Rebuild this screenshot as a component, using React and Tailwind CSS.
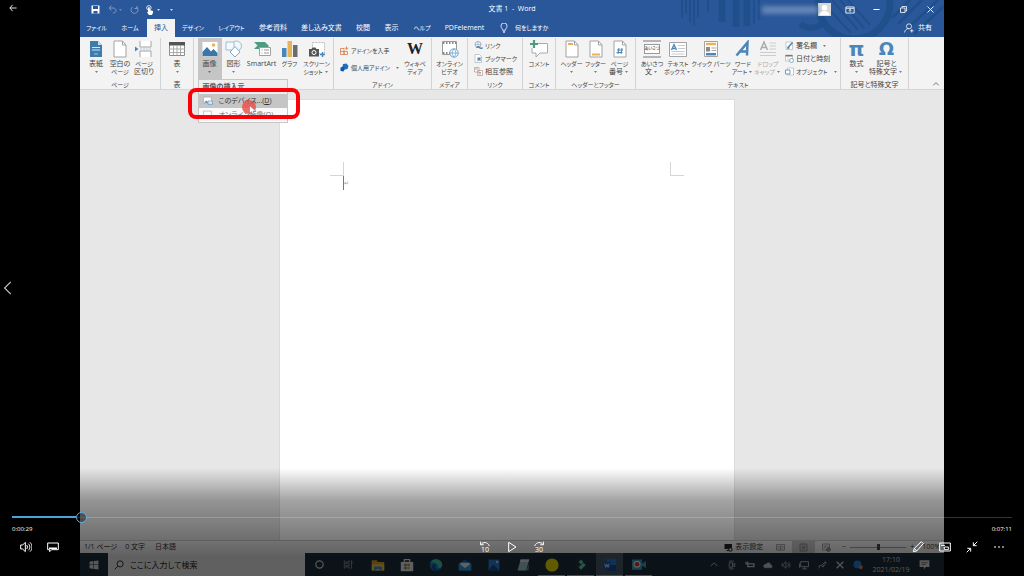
import React, { useState } from 'react';
import { clsx } from 'clsx';

const BLUE = '#4a86b8';

// Katakana and all-kana captions are set one size smaller than kanji
const textSize = (text = '') => (/[ァ-ヶ]|^[ぁ-ん]+$/.test(text) ? 'text-[6px]' : 'text-[7px]');

const Svg = ({ size = 18, vb = '0 0 18 18', className, children }) => (
    <svg width={size} height={size} viewBox={vb} fill="none" className={clsx('shrink-0', className)} aria-hidden="true">
        {children}
    </svg>
);

// Sheet of paper with a folded corner, used by many ribbon icons
const Sheet = ({ children }) => (
    <Svg>
        <path d="M3 1h8.500l3.500 4v12H3z" fill="#fff" stroke="#a3a3a3" />
        <path d="M11.500 1v4H15" stroke="#a3a3a3" />
        {children}
    </Svg>
);

const icons = {
    cover: (
        <Svg>
            <path d="M3 1h8l4 4v12H3z" fill="#3f7cae" />
            <path d="M11 1v4h4z" fill="#c9dcec" />
            <path d="M5 7.500h8M5 10h8" stroke="#d5e5f2" />
            <path d="M7 14h4" stroke="#9fc2de" />
        </Svg>
    ),
    blank: <Sheet />,
    pageBreak: (
        <Svg>
            <path d="M5 1v6h11V1M5 17v-6h11v6" fill="#fff" stroke="#a3a3a3" />
            <path d="M0 6.500l3.500 2.500L0 11.500z" fill={BLUE} />
            <path d="M5 9h12" stroke="#b5c9d9" strokeDasharray="2 1" />
        </Svg>
    ),
    table: (
        <Svg>
            <path d="M1.500 2.500h15v13h-15z" fill="#fff" stroke="#8d8d8d" />
            <path d="M1 2h16v3.500H1z" fill="#555" />
            <path d="M1.500 9h15M1.500 12.500h15M5.500 5v10M9 5v10M12.500 5v10" stroke="#aaa" />
        </Svg>
    ),
    picture: (
        <Svg>
            <path d="M1 1.500h16v15H1z" fill="#fff" stroke="#c8c8c8" />
            <path d="M1.500 16v-4l4.500-5 4 4.500 2.500-2.500 4 4v3z" fill="#3877a8" />
            <circle cx="12.500" cy="5" r="1.800" fill="#f0b44c" />
        </Svg>
    ),
    shapes: (
        <Svg>
            <circle cx="11.500" cy="6" r="5" fill="#f1f6fa" stroke="#9dbdd6" />
            <path d="M1 2h8v8H1z" fill="#f5f9fc" stroke="#9dbdd6" />
            <path d="M10 6.500l5 5.500-5 5-5-5z" fill="#fff" stroke="#7ea9ca" />
        </Svg>
    ),
    smartArt: (
        <Svg>
            <path d="M1 2h11l4 4-3 3H1l3.500-3.500z" fill="#4d9b81" />
            <path d="M6.500 7.500h11v8h-11z" fill="#fff" stroke="#a0a0a0" />
            <path d="M8.500 10h1M11 10h5M8.500 13h1M11 13h5" stroke="#999" />
        </Svg>
    ),
    chart: (
        <Svg>
            <path d="M1 8h4.500v9H1z" fill="#4a86b8" />
            <path d="M6.500 1H11v16H6.500z" fill="#e8b257" />
            <path d="M12 5h4.500v12H12z" fill="#6d6d6d" />
        </Svg>
    ),
    screenshot: (
        <Svg>
            <path d="M4.500 2.500h12v11h-12z" fill="#fff" stroke="#bbb" strokeDasharray="2 1" />
            <path d="M1 9h2.500l1-1.500h3L8.500 9H11v7.500H1z" fill="#555" />
            <circle cx="6" cy="12.500" r="2" fill="#555" stroke="#fff" />
            <path d="M12 14.500h5M14.500 12v5" stroke={BLUE} strokeWidth="1.500" />
        </Svg>
    ),
    video: (
        <Svg>
            <path d="M1.500 1.500h14v13h-14z" fill="#fff" stroke="#9a9a9a" />
            <path d="M2 3h13M2 13h8" stroke="#8a8a8a" strokeWidth="2" strokeDasharray="1.500 1.500" />
            <circle cx="13" cy="13" r="4.200" fill="#fff" stroke="#6ba2cd" />
            <path d="M9 13h8M13 9c-2.500 3-2.500 5 0 8M13 9c2.500 3 2.500 5 0 8" stroke="#6ba2cd" strokeWidth=".8" />
        </Svg>
    ),
    comment: (
        <Svg>
            <path d="M4 3.500h13.500V13H10l-4 4v-4H2V8" fill="#fff" stroke="#aaa" />
            <path d="M0 4h8M4 0v8" stroke="#4d9b81" strokeWidth="2.200" />
        </Svg>
    ),
    header: <Sheet><path d="M5 4h5" stroke="#e8b257" strokeWidth="2" /></Sheet>,
    footer: <Sheet><path d="M5 14.500h8" stroke="#e8b257" strokeWidth="2" /></Sheet>,
    pageNumber: (
        <Sheet><path d="M8 8l-1 6M11 8l-1 6M6 10h6M5.500 12.500h6" stroke={BLUE} strokeWidth="1.100" /></Sheet>
    ),
    textBox: (
        <Svg>
            <path d="M.5 2.500h17v14H.5z" fill="#fff" stroke="#a3a3a3" />
            <path d="M2.500 10L5 4.500 7.500 10M3.500 8.500h3" stroke={BLUE} strokeWidth="1.300" />
            <path d="M9 5.500h7M9 8.500h7M2.500 11.500h13M2.500 14h13" stroke="#c0cbd4" />
        </Svg>
    ),
    quickParts: (
        <Svg>
            <path d="M2.500 1.500h13v15h-13z" fill="#fff" stroke="#a3a3a3" />
            <path d="M4 4h10" stroke="#e8b257" strokeWidth="2.500" />
            <path d="M4 7h4v4.500H4z" fill="#8a8a8a" />
            <path d="M9.500 8h5M9.500 10.500h5" stroke="#aaa" />
            <path d="M4 14.200h10" stroke={BLUE} strokeWidth="2.500" />
        </Svg>
    ),
    wordArt: (
        <Svg>
            <path d="M2.500 15.500L13.500 2.500 13 15.500M6 11.500h8" stroke={BLUE} strokeWidth="2.500" />
        </Svg>
    ),
    dropCap: (
        <Svg>
            <path d="M1.500 10L5 2l3.500 8M2.500 7.500h5" stroke="#aaa" strokeWidth="1.400" />
            <path d="M10.500 3H17M10.500 6H17M10.500 9H17M1 12.500h16M1 15.500h16" stroke="#ccc" />
        </Svg>
    ),
};

const Arrow = ({ light }) => (
    <svg width="3" height="2" viewBox="0 0 4 2" className="mx-0.5 inline-block align-middle" aria-hidden="true">
        <path d="M0 0h4L2 2z" fill={light ? '#fff' : '#555'} />
    </svg>
);

const BigButton = ({ icon, lines, arrow, inlineArrow, className = 'w-6', disabled }) => (
    <button
        disabled={disabled}
        className={clsx('flex h-[41px] shrink-0 flex-col items-center pt-0.5', className, disabled && 'text-[#aaa]')}
    >
        {icon}
        <span className="mt-0.5 flex flex-col items-center whitespace-nowrap">
            {lines.map((line, i) => (
                <span key={line} className={clsx('block h-2 leading-2', textSize(line))}>
                    {line}
                    {inlineArrow && i === lines.length - 1 && <Arrow />}
                </span>
            ))}
            {arrow && <span className="flex h-2 items-center"><Arrow /></span>}
        </span>
    </button>
);

const SmallButton = ({ icon, label, arrow }) => (
    <button className="flex items-center gap-0.5 whitespace-nowrap">
        {icon}
        <span className={clsx('leading-2', textSize(label))}>{label}</span>
        {arrow && <span className="ml-0.5 flex"><Arrow /></span>}
    </button>
);

const Group = ({ label, className, children }) => (
    <section aria-label={label} className={clsx('flex shrink-0 flex-col justify-between border-r border-[#d2d2d2]', className)}>
        <div className="flex justify-center">{children}</div>
        <div className={clsx('h-2 text-center leading-2 whitespace-nowrap', textSize(label))}>{label}</div>
    </section>
);

const PictureMenu = () => (
    <div className="absolute left-0 top-full z-10 w-[90px] border border-[#c6c6c6] bg-[#fafafa] text-left">
        <div className="flex h-3.5 items-center bg-[#eee] px-1 font-bold text-[#555]">画像の挿入元</div>
        <button className="flex h-3.5 w-full items-center gap-1.5 bg-[#c5c5c5] px-1 text-[#333]">
            <Svg size={10}>
                <path d="M1 2h14v11H1z" fill="#fff" stroke="#999" />
                <path d="M2 12l4-4 4 4z" fill={BLUE} />
                <path d="M9 9h8v6H9z" fill="#dbe9f4" stroke={BLUE} />
            </Svg>
            <span>このデバイス...(<u>D</u>)</span>
        </button>
        <button className="flex h-3.5 w-full items-center gap-1.5 px-1 text-[#777]">
            <Svg size={10}><path d="M1 2h14v13H1z" fill="#fff" stroke="#999" /></Svg>
            <span>オンライン画像(<u>O</u>)</span>
        </button>
        {/* highlight frame and click marker */}
        <div className="pointer-events-none absolute -left-[11px] top-2 h-[31px] w-28 rounded-lg border-4 border-[#fb0007]" />
        <div className="pointer-events-none absolute left-[43px] top-5 size-3.5 rounded-full bg-[#ea4b45]/80" />
        <svg width="8" height="11" viewBox="0 0 8 11" className="pointer-events-none absolute left-[50px] top-[25px]" aria-hidden="true">
            <path d="M.5.500v8l2-1.800 1.300 3 1.400-.6L4 6.300h3z" fill="#fff" stroke="#777" strokeWidth=".6" />
        </svg>
    </div>
);

const tabs = [
    ['ファイル', 'w-[33px]'],
    ['ホーム', 'w-[34px]'],
    ['挿入', 'w-7'],
    ['デザイン', 'w-9'],
    ['レイアウト', 'w-[41px]'],
    ['参考資料', 'w-[42px]'],
    ['差し込み文書', 'w-[55px]'],
    ['校閲', 'w-7'],
    ['表示', 'w-[29px]'],
    ['ヘルプ', 'w-8'],
    ['PDFelement', 'w-[53px]'],
];

const TitleArt = () => (
    <svg width="264" height="37" viewBox="0 0 264 37" className="absolute right-0 top-0" fill="none" aria-hidden="true">
        <g stroke="#20508c">
            <path d="M2 0v18M6 0v14M10 0v23M14 0v25M18 0v17M28 0v12" strokeWidth="2" />
            <path d="M42 0v22M56 0v27M67 0v26" strokeWidth="7" />
            <path d="M74 0v24M79 0v20" strokeWidth="2" />
            <circle cx="174" cy="3" r="36" strokeWidth="7" />
            <path d="M120 24c6 5 16 5 22 0" strokeWidth="6" />
            <path d="M145 5l26 28M152 0l26 30M160 0l24 28M168 0l22 25" strokeWidth="2" />
            <path d="M226 30l32-30M234 34l30-28M218 24l24-24M212 18l18-18" strokeWidth="3" />
        </g>
    </svg>
);

const TitleBar = () => (
    <div className="relative flex h-[19px] items-center text-white">
        <div className="flex flex-1 items-center">
            <button aria-label="上書き保存" className="ml-[11px]">
                <Svg size={9}><path d="M1 1h16v16H1z" fill="#fff" /><path d="M4 2h10v6H4zM5 12h8v5H5z" fill="#2a579a" /></Svg>
            </button>
            <button aria-label="元に戻す" className="ml-2 flex items-center opacity-40">
                <Svg size={9}><path d="M7 1L2 6l5 5M2 6h8c4 0 6 3 6 5s-2 5-6 5" stroke="#fff" strokeWidth="2" /></Svg>
                <Arrow light />
            </button>
            <button aria-label="やり直し" className="ml-1.5 opacity-40">
                <Svg size={9}><path d="M14 2v5H9M13 4a7 7 0 1 1-8 0" stroke="#fff" strokeWidth="2" /></Svg>
            </button>
            <button aria-label="タッチ/マウス モード" className="ml-1.5 flex items-center">
                <Svg size={10}>
                    <circle cx="7" cy="5" r="4" stroke="#fff" strokeWidth="1.500" />
                    <path d="M5.500 4h3v5l6 2v3l-2 4H7l-4-6 2.500 1z" fill="#fff" />
                </Svg>
                <Arrow light />
            </button>
            <button aria-label="クイック アクセス ツール バーのユーザー設定" className="ml-1.5 flex"><Arrow light /></button>
        </div>
        <h1 className="text-[7px]">文書 1&nbsp; - &nbsp;Word</h1>
        <div className="flex flex-1 items-center justify-end">
            <div className="h-2 w-14 bg-[#6485b5] blur-[2px]" />
            <Svg size={13} className="bg-[#d9d9d9]">
                <circle cx="9" cy="6.500" r="3.800" fill="#fff" />
                <path d="M2 17c0-8 14-8 14 0z" fill="#fff" />
            </Svg>
            <button aria-label="リボンの表示オプション" className="ml-3.5">
                <Svg size={10}><path d="M1.500 3.500h15v11h-15zM2 6h14M9 13V8M6.500 10L9 8l2.500 2" stroke="#fff" strokeWidth="1.500" /></Svg>
            </button>
            <button aria-label="最小化" className="ml-[17px]">
                <Svg size={9}><path d="M3 9h12" stroke="#fff" strokeWidth="2" /></Svg>
            </button>
            <button aria-label="元に戻す (縮小)" className="ml-[18px]">
                <Svg size={9}><path d="M3 6h9v9H3zM6 6V3h9v9h-3" stroke="#fff" strokeWidth="1.600" /></Svg>
            </button>
            <button aria-label="閉じる" className="ml-[18px] mr-[9px]">
                <Svg size={9}><path d="M3 3l12 12M15 3L3 15" stroke="#fff" strokeWidth="1.800" /></Svg>
            </button>
        </div>
    </div>
);

const TabBar = () => (
    <nav className="relative flex h-[18px] text-[7px] text-white">
        {tabs.map(([name, width]) => (
            <button
                key={name}
                className={clsx(
                    'flex shrink-0 items-center justify-center whitespace-nowrap',
                    width,
                    textSize(name),
                    name === '挿入' && 'bg-[#f3f3f3] text-[#2a579a]',
                )}
            >
                {name}
            </button>
        ))}
        <button className="ml-2 flex items-center gap-1.5 text-[6px]">
            <Svg size={10}>
                <path d="M6.500 13c0-3-3-4-3-7.500a5.500 5.500 0 0 1 11 0C14.500 9 11.500 10 11.500 13zM7 15h4M7.500 17h3" stroke="#fff" strokeWidth="1.400" />
            </Svg>
            何をしますか
        </button>
        <button className="ml-auto mr-3 flex items-center gap-1">
            <Svg size={10}><circle cx="9" cy="6" r="4.500" stroke="#fff" strokeWidth="1.400" /><path d="M1 17c1-5 4-7 8-7M11 14h6M14 11v6" stroke="#fff" strokeWidth="1.400" /></Svg>
            共有
        </button>
    </nav>
);

const Ribbon = () => (
    <div className="flex h-[53px] border-b border-[#d5d5d5] bg-[#f3f3f3] pt-px text-[7px] leading-2 text-[#444]">
        <Group label="ページ" className="w-[81px]">
            <BigButton icon={icons.cover} lines={['表紙']} arrow />
            <BigButton icon={icons.blank} lines={['空白の', 'ページ']} />
            <BigButton icon={icons.pageBreak} lines={['ページ', '区切り']} />
        </Group>
        <Group label="表" className="w-[33px]">
            <BigButton icon={icons.table} lines={['表']} arrow />
        </Group>
        <Group className="w-[140px] pl-0.5">
            <div className="relative">
                <BigButton icon={icons.picture} lines={['画像']} arrow className="w-6 bg-[#c5c5c5]" />
                <PictureMenu />
            </div>
            <BigButton icon={icons.shapes} lines={['図形']} arrow />
            <BigButton icon={icons.smartArt} lines={['SmartArt']} className="w-8" />
            <BigButton icon={icons.chart} lines={['グラフ']} />
            <BigButton icon={icons.screenshot} lines={['スクリーン', 'ショット']} inlineArrow className="w-[30px]" />
        </Group>
        <Group label="アドイン" className="w-[98px]">
            <div className="flex w-[65px] flex-col items-start gap-2 pl-1.5 pt-2">
                <SmallButton
                    icon={<Svg size={9}><path d="M1 5h7v12H1zM1 11h14M8 11v6h7v-6M13 1v7M9.500 4.500h7" stroke="#dc7a45" strokeWidth="1.600" /></Svg>}
                    label="アドインを入手"
                />
                <SmallButton
                    icon={<Svg size={9}><path d="M6 2l7-1 4 5-2 6-5 1-5-4z" fill="#1e6fbf" /><path d="M1 9l5-2 4 5-3 5-6-1z" fill="#0f5aa8" /></Svg>}
                    label="個人用アドイン"
                    arrow
                />
            </div>
            <BigButton
                icon={<span className="flex h-[18px] items-center font-['Liberation_Serif',serif] text-base font-bold leading-none text-[#222]">W</span>}
                lines={['ウィキペ', 'ディア']}
                className="w-8"
            />
        </Group>
        <Group label="メディア" className="w-9">
            <BigButton icon={icons.video} lines={['オンライン', 'ビデオ']} className="w-8" />
        </Group>
        <Group label="リンク" className="w-[55px]">
            <div className="flex flex-1 flex-col items-start gap-1 pl-1.5 pt-[3px]">
                <SmallButton
                    icon={<Svg size={9}><circle cx="8" cy="7" r="6" stroke="#8a9dac" strokeWidth="1.500" /><path d="M2 7h12M8 1v12" stroke="#8a9dac" /><path d="M6 14c0-3 4-3 5-1s6 2 6 0" stroke={BLUE} strokeWidth="3" /></Svg>}
                    label="リンク"
                />
                <SmallButton
                    icon={<Svg size={9}><path d="M2 1h9l4 4v12H2z" fill="#fff" stroke="#999" /><path d="M7 16V7h8l-3 3 3 3H8" fill={BLUE} /></Svg>}
                    label="ブックマーク"
                />
                <SmallButton
                    icon={<Svg size={9}><path d="M1 1h9v9H1zM7 7h10v10H7z" fill="#fff" stroke="#999" strokeWidth="1.300" /><path d="M2 4h6M9 11h5M9 14h5" stroke="#c96a52" strokeWidth="1.500" /></Svg>}
                    label="相互参照"
                />
            </div>
        </Group>
        <Group label="コメント" className="w-[33px]">
            <BigButton icon={icons.comment} lines={['コメント']} className="w-7" />
        </Group>
        <Group label="ヘッダーとフッター" className="w-20">
            <BigButton icon={icons.header} lines={['ヘッダー']} arrow />
            <BigButton icon={icons.footer} lines={['フッター']} arrow />
            <BigButton icon={icons.pageNumber} lines={['ページ', '番号']} inlineArrow />
        </Group>
        <Group label="テキスト" className="w-[205px]">
            <BigButton
                icon={
                    <span className="flex size-[18px] items-center justify-center border-y-2 border-[#b5b5b5]">
                        <span className="whitespace-nowrap border border-[#999] bg-white text-[4px] leading-2 text-black">あいさつ</span>
                    </span>
                }
                lines={['あいさつ', '文']}
                inlineArrow
                className="w-[26px]"
            />
            <BigButton icon={icons.textBox} lines={['テキスト', 'ボックス']} inlineArrow className="w-[26px]" />
            <BigButton icon={icons.quickParts} lines={['クイック パーツ']} arrow className="w-10" />
            <BigButton icon={icons.wordArt} lines={['ワード', 'アート']} inlineArrow />
            <BigButton icon={icons.dropCap} lines={['ドロップ', 'キャップ']} inlineArrow disabled className="w-[26px]" />
            <div className="flex w-14 flex-col items-start gap-1 pl-1 pt-[3px]">
                <SmallButton
                    icon={<Svg size={9}><path d="M2 2h13v15H2z" fill="#fff" stroke="#999" /><path d="M6 13l9-10M4 14h5" stroke={BLUE} strokeWidth="3" /></Svg>}
                    label="署名欄"
                    arrow
                />
                <SmallButton
                    icon={<Svg size={9}><path d="M1 2h14v12H1z" fill="#fff" stroke="#999" /><path d="M1 2h14v3H1z" fill="#777" /><circle cx="13" cy="13" r="4" fill="#fff" stroke={BLUE} strokeWidth="1.300" /><path d="M4 8h5M4 11h4" stroke="#e8b257" /></Svg>}
                    label="日付と時刻"
                />
                <SmallButton
                    icon={<Svg size={9}><path d="M5 2h12v14H5z" fill="#fff" stroke="#999" /><path d="M1 6h9v8H1z" fill="#fff" stroke={BLUE} strokeWidth="1.600" /></Svg>}
                    label="オブジェクト"
                    arrow
                />
            </div>
        </Group>
        <Group label="記号と特殊文字" className="w-[68px]">
            <BigButton icon={<span className="flex h-[18px] items-center font-['DejaVu_Sans',sans-serif] text-xl font-bold leading-none text-[#4a86b8]">π</span>} lines={['数式']} arrow />
            <BigButton icon={<span className="flex h-[18px] items-center font-['DejaVu_Sans',sans-serif] text-lg font-bold leading-none text-[#4a86b8]">Ω</span>} lines={['記号と', '特殊文字']} inlineArrow className="w-9" />
        </Group>
        <button aria-label="リボンを折りたたむ" className="ml-auto mr-1 self-end pb-px">
            <Svg size={8}><path d="M3 12l6-6 6 6" stroke="#666" strokeWidth="2" /></Svg>
        </button>
    </div>
);

const DocumentArea = () => (
    <main className="flex min-h-0 flex-1 justify-center overflow-hidden bg-[#e7e7e7] pr-2.5 pt-[9px]">
        <div className="w-[456px] border border-b-0 border-[#dcdcdc] bg-white px-[50px] pt-[62px]">
            <div className="flex justify-between">
                <span className="size-3.5 border-b border-r border-[#d5d5d5]" />
                <span className="size-3.5 border-b border-l border-[#d5d5d5]" />
            </div>
            <p className="ml-[13px] flex h-3.5 items-center border-l border-[#777] text-[6px] text-[#999]">↵</p>
        </div>
    </main>
);

const StatusBar = () => (
    <footer className="flex h-[13px] shrink-0 items-center border-t border-[#c8c8c8] bg-[#f1f1f1] pl-1 text-[7px] text-[#333]">
        <span>1/1 ページ</span>
        <span className="ml-2">0 文字</span>
        <span className="ml-2.5">日本語</span>
        <button className="ml-auto flex items-center gap-0.5">
            <Svg size={9}><path d="M1 2h15v10H1zM5 14h5v2H5z" fill="#222" /><circle cx="13" cy="13" r="3.500" fill="#ddd" stroke="#222" strokeWidth="2" /></Svg>
            表示設定
        </button>
        <button aria-label="閲覧モード" className="ml-1.5 flex h-full w-[23px] items-center justify-center">
            <Svg size={9}><path d="M9 4v11M1 3h7l1 1 1-1h7v11H1zM3 7h4M3 10h4M11 7h4M11 10h4" stroke="#777" strokeWidth="1.300" /></Svg>
        </button>
        <button aria-label="印刷レイアウト" className="flex h-full w-[23px] items-center justify-center bg-[#c9c9c9]">
            <Svg size={9}><path d="M2 2h14v14H2zM5 6h8M5 9h8M5 12h8" stroke="#666" strokeWidth="1.300" /></Svg>
        </button>
        <button aria-label="Web レイアウト" className="flex h-full w-[23px] items-center justify-center">
            <Svg size={9}><path d="M1 2h14v12H1zM3 6h10M3 9h5" stroke="#777" strokeWidth="1.300" /><circle cx="13" cy="13" r="4" fill="#999" stroke="#555" /></Svg>
        </button>
        <span className="ml-1">−</span>
        <input
            type="range"
            aria-label="ズーム"
            defaultValue="50"
            className="mx-1 h-2 w-14 appearance-none bg-[linear-gradient(#999,#999)] bg-[length:100%_1px] bg-center bg-no-repeat [&::-webkit-slider-thumb]:h-1.5 [&::-webkit-slider-thumb]:w-[3px] [&::-webkit-slider-thumb]:appearance-none [&::-webkit-slider-thumb]:bg-[#444]"
        />
        <span>+</span>
        <span className="ml-2 mr-1">100%</span>
    </footer>
);

const apps = [
    ['Cortana', <circle cx="9" cy="9" r="6" stroke="#ddd" strokeWidth="2" />],
    ['タスク ビュー', <path d="M2 2v3h8V2M2 16v-3h8v3M2 7h8v4H2zM14 2v14M13 6h3" stroke="#999" strokeWidth="1.400" />],
    ['エクスプローラー', <g><path d="M1 3h6l2 2h8v11H1z" fill="#e0a62c" /><path d="M1 8h16v8H1z" fill="#f7c94b" /><path d="M4 16v-5h10v5h-3v-2H7v2z" fill="#3e8fd6" /></g>],
    ['Microsoft Store', <g><path d="M5.500 6V2h7v4" stroke="#eee" strokeWidth="1.500" /><path d="M1 5h16v12H1z" fill="#eee" /><path d="M5.500 7.500h3v3h-3z" fill="#e2492f" /><path d="M9.500 7.500h3v3h-3z" fill="#6fae25" /><path d="M5.500 11.500h3v3h-3z" fill="#2a8ad8" /><path d="M9.500 11.500h3v3h-3z" fill="#f0b010" /></g>],
    ['Edge', <g><circle cx="9" cy="9" r="8" fill="#1878c8" /><path d="M2 6a8 8 0 0 1 15 3c0 4-5 5-6 3 2-4-4-7-9-6z" fill="#45c9a0" /><path d="M8 8c-2 5 2 8 7 6-3 5-12 3-11-3 .5-2 2-3 4-3z" fill="#0d4d91" /></g>],
    ['メール', <g><path d="M1 7l8-5 8 5v9H1z" fill="#1471b8" /><path d="M3 6h12v5l-6 3-6-3z" fill="#f2f2f2" /><path d="M1 7l8 6 8-6v9H1z" fill="#2e9be6" /></g>],
    ['フォト', <g><path d="M2 2h14v14H2z" fill="#2e7fd0" /><path d="M2 16l6-8 8 8z" fill="#15498a" /><circle cx="13" cy="5" r="1.500" fill="#cfe3f5" /></g>],
    ['メモ帳', <g><path d="M6 2h11l-4 14H2z" fill="#9fc6cf" /><path d="M6 2h11l-1 3H5z" fill="#d8e6e9" /><path d="M13 16l4-9-1 9z" fill="#6b8c94" /></g>],
    ['レコーダー', <circle cx="9" cy="9" r="8.500" fill="#f0e000" />],
    ['Filmora', <g><path d="M2 1h14v16H2z" fill="#26333a" /><path d="M9 2l3 3-3 3-3-3zM12 6l3 3-6 6-3-3z" fill="#55d8bd" /></g>],
    ['Word', <g><path d="M5 1h12v16H5z" fill="#2b7cd3" /><path d="M5 9h12v8H5z" fill="#174a96" /><path d="M0 5h10v9H0z" fill="#1a56ad" /><path d="M2 7l1.500 5L5 8l1.500 4L8 7" stroke="#fff" /></g>],
    ['画面録画', <g><path d="M0 2h13v13H0zM13 7l5-3v9l-5-3z" fill="#37a3c4" /><circle cx="6.500" cy="8" r="4.500" fill="#eee" /><circle cx="6.500" cy="8" r="3" fill="#d8382c" /></g>],
];

const tray = [
    ['隠れているインジケーター', <path d="M3 11l6-6 6 6" strokeWidth="1.600" />],
    ['Meet Now', <path d="M4 5h6v8H4zM10 8l4-2v6l-4-2M4 2h8M4 16h8" strokeWidth="1.400" />],
    ['バッテリー', <path d="M5 7h11v5H5zM2 3v5M5 3v3" strokeWidth="2.500" />],
    ['OneDrive', <path d="M3 14h12c2-1 2-5-1-5-1-5-7-5-8-1-5-1-6 4-3 6z" fill="#ccc" strokeWidth="1" />],
    ['音量', <path d="M2 7h3l4-4v12l-4-4H2zM12 6c2 2 2 4 0 6M14 4c3 3 3 7 0 10" strokeWidth="1.300" />],
    ['ネットワーク', <path d="M3 3h14v9H3zM10 12v4M6 16h8M1 6v8" strokeWidth="1.500" />],
    ['Windows Ink', <path d="M3 15c3-3-1-5 3-5s4 5 7 0M8 10l7-7 1 3-6 6" strokeWidth="1.600" />],
    ['X', <path d="M3 3l12 12M15 3L3 15" strokeWidth="2.500" />],
    ['ブラウザー', <g stroke="none"><circle cx="8" cy="8" r="7" fill="#2a80de" /><circle cx="14" cy="13" r="3.500" fill="#f07a45" /></g>],
];

const Taskbar = () => (
    <div className="flex h-[23px] shrink-0 bg-[#1b303d]">
        <button aria-label="スタート" className="flex w-7 items-center justify-center">
            <Svg size={10}><path d="M1 3l7-1v6H1zM9 2l8-1v7H9zM1 9h7v7l-7-1zM9 9h8v8l-8-1z" fill="#ddd" /></Svg>
        </button>
        <label className="flex w-[197px] items-center gap-1.5 bg-[#f0f0f0] pl-1.5 text-[8px]">
            <Svg size={10}><circle cx="11" cy="7" r="5.500" stroke="#222" strokeWidth="1.600" /><path d="M7 11l-6 6" stroke="#222" strokeWidth="1.600" /></Svg>
            <input type="search" aria-label="検索" placeholder="ここに入力して検索" className="w-full min-w-0 bg-transparent outline-none placeholder:text-[#222]" />
        </label>
        {apps.map(([name, drawing], i) => (
            <button key={name} aria-label={name} className="flex w-[29px] shrink-0 justify-center px-px">
                <span
                    className={clsx(
                        'flex h-full w-full items-center justify-center border-y border-t-transparent',
                        i > 7 ? 'border-b-[#b5c9d9]' : 'border-b-transparent',
                        name === 'Word' && 'bg-[#4a5c68]',
                    )}
                >
                    <Svg size={i < 2 ? 11 : 14}>{drawing}</Svg>
                </span>
            </button>
        ))}
        <div className="ml-auto flex items-center">
            {tray.map(([name, drawing]) => (
                <button key={name} aria-label={name} className="flex w-[18px] justify-center">
                    <Svg size={10}><g stroke="#ccc">{drawing}</g></Svg>
                </button>
            ))}
            <div className="w-12 text-center text-[7px] leading-[10px] text-[#ddd]">
                <div>17:10</div>
                <div>2021/02/19</div>
            </div>
            <button aria-label="通知" className="ml-1 mr-3.5">
                <Svg size={11}><path d="M1 2h16v11h-6l-3 4v-4H1z" fill="#ddd" /><path d="M4 6h10M4 9h7" stroke="#444" /></Svg>
            </button>
        </div>
    </div>
);

const PlayerButton = ({ label, size = 12, children }) => (
    <button aria-label={label} className="flex w-[27px] items-center justify-center">
        <Svg size={size}>
            <g stroke="#fff" strokeWidth="1.500">{children}</g>
        </Svg>
    </button>
);

const SkipButton = ({ label, seconds, children }) => (
    <button aria-label={label} className="flex w-[27px] flex-col items-center">
        <svg width="12" height="5" viewBox="0 0 18 8" fill="none" stroke="#fff" strokeWidth="1.600" aria-hidden="true">
            {children}
        </svg>
        <span className="text-[7px] leading-[7px]">{seconds}</span>
    </button>
);

const PlayerControls = () => {
    const duration = 431;
    const [position, setPosition] = useState(28);
    const percent = (position / duration) * 100;

    return (
        <div className="absolute inset-x-0 bottom-0 flex h-[108px] flex-col bg-[linear-gradient(rgba(0,0,0,0),rgba(0,0,0,0.36)_30%,rgba(0,0,0,0.52)_66%,rgba(0,0,0,0.6)_82%)] px-3 pt-[43px] text-[7px] text-white">
            <div className="relative flex h-3 items-center">
                <div className="flex h-px flex-1 items-center bg-white/20">
                    <div className="h-0.5 bg-[#4aa3dc]" style={{ width: `${percent - 0.1}%` }} />
                </div>
                <input
                    type="range"
                    aria-label="シーク"
                    min="0"
                    max={duration}
                    value={position}
                    onChange={(e) => setPosition(Number(e.target.value))}
                    className="absolute inset-0 m-0 w-full appearance-none bg-transparent [&::-webkit-slider-thumb]:size-[11px] [&::-webkit-slider-thumb]:appearance-none [&::-webkit-slider-thumb]:rounded-full [&::-webkit-slider-thumb]:border-[1px] [&::-webkit-slider-thumb]:border-[#5ab4ea] [&::-webkit-slider-thumb]:bg-black/40"
                />
            </div>
            <div className="flex justify-between text-[6px] leading-3">
                <span>0:00:29</span>
                <span>0:07:11</span>
            </div>
            <div className="mt-1.5 flex h-3 items-center">
                <div className="flex flex-1">
                    <PlayerButton label="音量"><path d="M1 6h3l4-4v14l-4-4H1zM10 6c1.500 2 1.500 4 0 6M12.500 4c3 3 3 7 0 10M15 2c4 4 4 10 0 14" /></PlayerButton>
                    <PlayerButton label="字幕"><path d="M1 3h16v10H7l-3 3v-3H1z" /><path d="M3 11h12" strokeWidth="2.500" /></PlayerButton>
                </div>
                <SkipButton label="10 秒戻る" seconds="10"><path d="M2 1v5h5M2 6c4-5 11-5 14 2" /></SkipButton>
                <PlayerButton label="再生"><path d="M4 2l11 7-11 7z" /></PlayerButton>
                <SkipButton label="30 秒進む" seconds="30"><path d="M16 1v5h-5M16 6c-4-5-11-5-14 2" /></SkipButton>
                <div className="flex flex-1 justify-end">
                    <PlayerButton label="編集"><path d="M2 16l1.500-5L14 1l3 3L7 15zM3.500 11L7 15" /></PlayerButton>
                    <PlayerButton label="ミニ ビュー"><path d="M1 3h16v12H1zM3 6.500h6M8 9h6v4H8z" /></PlayerButton>
                    <PlayerButton label="全画面表示の終了"><path d="M17 1l-6 6M11 2v5h5M1 17l6-6M2 11h5v5" /></PlayerButton>
                    <PlayerButton label="その他"><path d="M2 9h2M8 9h2M14 9h2" strokeWidth="2" /></PlayerButton>
                </div>
            </div>
        </div>
    );
};

const App = () => (
    <div
        lang="ja"
        className="relative flex h-screen w-full overflow-hidden bg-black font-['Open_Sans','Noto_Sans_CJK_JP',sans-serif] [font-feature-settings:'palt']"
    >
        <aside className="flex w-20 shrink-0 flex-col pl-[3px]">
            <button aria-label="戻る" className="ml-1.5 mt-1 self-start">
                <Svg size={8}><path d="M8 2L2 9l6 7M2 9h15" stroke="#fff" strokeWidth="2" /></Svg>
            </button>
            <button aria-label="前へ" className="my-auto self-start">
                <Svg size={14} className="-mt-3"><path d="M10 1L2 9l8 8" stroke="#ccc" strokeWidth="1.400" /></Svg>
            </button>
        </aside>
        <div className="flex min-w-0 flex-1 flex-col">
            <header className="relative bg-[#2a579a]">
                <TitleArt />
                <TitleBar />
                <TabBar />
            </header>
            <Ribbon />
            <DocumentArea />
            <StatusBar />
            <Taskbar />
        </div>
        <aside className="w-20 shrink-0" />
        <PlayerControls />
    </div>
);

export default App;
